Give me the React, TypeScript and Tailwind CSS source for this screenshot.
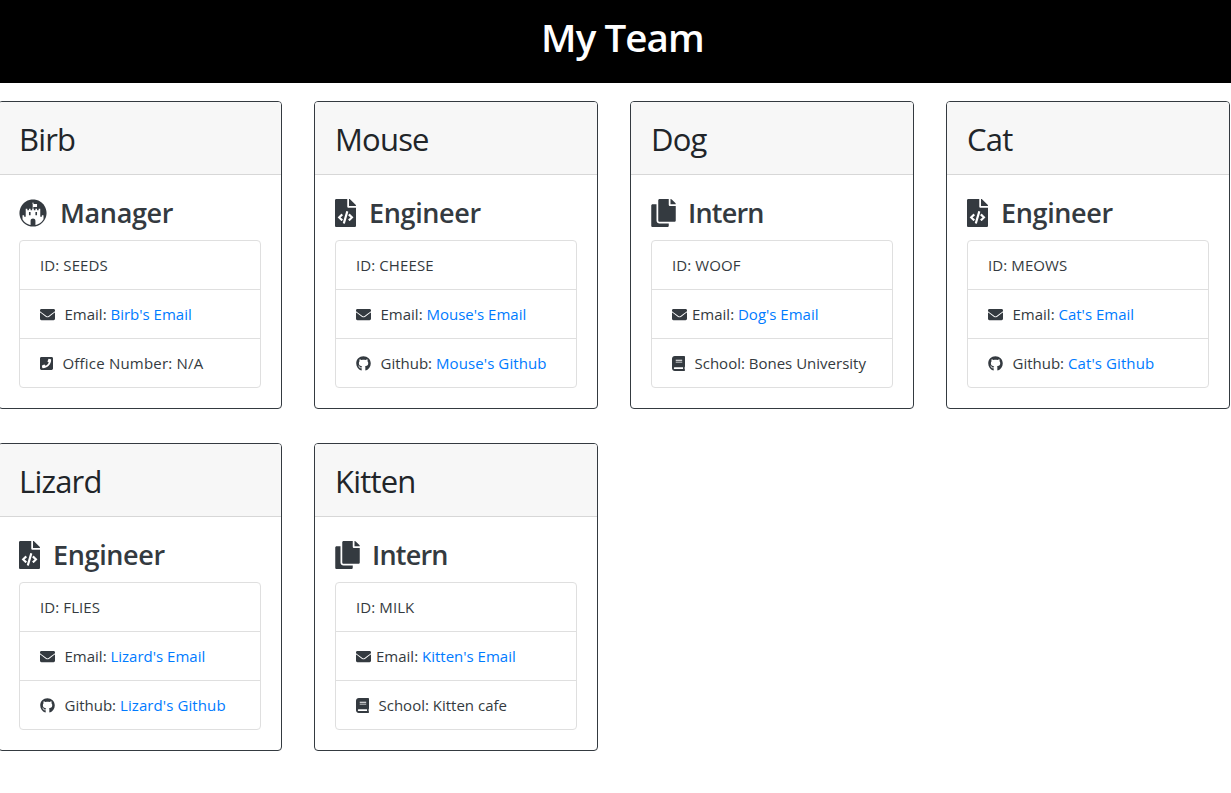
import type { ReactNode } from "react";
import { FaBook, FaCopy, FaEnvelope, FaFileCode, FaFortAwesomeAlt, FaGithub, FaPhoneSquare } from "react-icons/fa";

type Role = "Manager" | "Engineer" | "Intern";

interface Member {
  name: string;
  role: Role;
  id: string;
  detail: string;
}

const team: Member[] = [
  { name: "Birb", role: "Manager", id: "SEEDS", detail: "N/A" },
  { name: "Mouse", role: "Engineer", id: "CHEESE", detail: "Mouse's Github" },
  { name: "Dog", role: "Intern", id: "WOOF", detail: "Bones University" },
  { name: "Cat", role: "Engineer", id: "MEOWS", detail: "Cat's Github" },
  { name: "Lizard", role: "Engineer", id: "FLIES", detail: "Lizard's Github" },
  { name: "Kitten", role: "Intern", id: "MILK", detail: "Kitten cafe" },
];

function RoleTitle({ role }: { role: Role }) {
  const gap = role === "Intern" ? "gap-3 tracking-[-0.8px]" : "gap-[13px] tracking-[-0.35px]";
  return (
    <h3 className={`flex h-[34px] items-center text-[27px] leading-[34px] font-semibold ${gap}`}>
      {role === "Manager" && <FaFortAwesomeAlt className="size-7" />}
      {role === "Engineer" && <FaFileCode className="h-7 w-[21px]" />}
      {role === "Intern" && <FaCopy className="h-7 w-[25px]" />}
      <span>{role}</span>
    </h3>
  );
}

function Row({ children, className = "" }: { children: ReactNode; className?: string }) {
  return (
    <li className={`flex h-[49px] items-center border-b border-[#dfdfdf] pl-5 whitespace-pre last:h-12 last:border-b-0 ${className}`}>
      {children}
    </li>
  );
}

function Link({ children }: { children: ReactNode }) {
  return <a href="#" className="text-[#007bff]">{children}</a>;
}

function Card({ name, role, id, detail }: Member) {
  return (
    <article className="h-[308px] w-[284px] rounded-[4px] border border-[#343a40] bg-white">
      <header className="h-[73px] rounded-t-[3px] border-b border-[#d7d7d7] bg-[#f7f7f7] px-5 pt-[18px]">
        <h2 className="text-[31px] leading-[38px] font-normal tracking-[-0.8px] text-[#212529]">{name}</h2>
      </header>
      <div className="px-5 pt-[21px] text-[#343a40]">
        <RoleTitle role={role} />
        <ul className="mt-[10px] h-[148px] w-[242px] rounded-[4px] border border-[#dfdfdf] text-[15px] font-normal">
          <Row className="tracking-[0.1px]">ID: {id}</Row>
          <Row className={role === "Intern" ? "gap-[5px]" : "gap-[9.5px]"}>
            <FaEnvelope className="size-[15px]" />
            <span>Email: <Link>{name}'s Email</Link></span>
          </Row>
          <Row className={role === "Manager" ? "gap-[9.5px] tracking-[0.2px]" : "gap-[9.5px]"}>
            {role === "Manager" && <FaPhoneSquare className="h-[15px] w-[13px]" />}
            {role === "Engineer" && <FaGithub className="size-[15px]" />}
            {role === "Intern" && <FaBook className="h-[15px] w-[13px]" />}
            <span>
              {role === "Manager" && <>Office Number: {detail}</>}
              {role === "Engineer" && <>Github: <Link><span className="tracking-[0.1px]">{detail}</span></Link></>}
              {role === "Intern" && <>School: {detail}</>}
            </span>
          </Row>
        </ul>
      </div>
    </article>
  );
}

export default function App() {
  return (
    <div className="h-[793px] w-full overflow-hidden bg-white font-['Open_Sans',sans-serif]">
      <header className="flex h-[83px] justify-center bg-black pt-[13px] pl-[14px]">
        <h1 className="text-[38.5px] leading-[48px] font-semibold tracking-[-0.9px] text-white">My Team</h1>
      </header>
      <main className="mt-[18px] -ml-[2px] grid w-[1232px] grid-cols-[repeat(4,284px)] gap-x-8 gap-y-[34px]">
        {team.map((member) => <Card key={member.name} {...member} />)}
      </main>
    </div>
  );
}
